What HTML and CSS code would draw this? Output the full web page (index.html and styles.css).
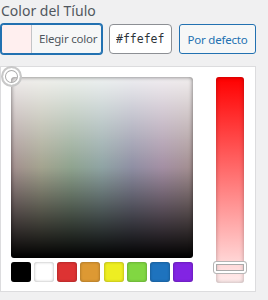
FILE: index.html
```html
<!DOCTYPE html>
<html lang="es">
<head>
    <meta charset="UTF-8" />
    <title>Color del Tíulo</title>
    <link rel="stylesheet" href="styles.css">
</head>
<body>
    <div class="control">
        <span class="control-title">Color del Tíulo</span>

        <div class="picker-row">
            <button class="color-result">
                <span class="color-swatch"></span>
                <span class="color-label">Elegir color</span>
            </button>
            <input type="text" class="color-input" value="#ffefef" />
            <button class="default-btn">Por defecto</button>
        </div>

        <div class="iris">
            <div class="iris-left">
                <div class="iris-square">
                    <span class="square-handle"></span>
                </div>
                <div class="palette">
                    <span class="pal" style="background:#000000"></span>
                    <span class="pal" style="background:#ffffff"></span>
                    <span class="pal" style="background:#dd3333"></span>
                    <span class="pal" style="background:#dd9933"></span>
                    <span class="pal" style="background:#eeee22"></span>
                    <span class="pal" style="background:#81d742"></span>
                    <span class="pal" style="background:#1e73be"></span>
                    <span class="pal" style="background:#8224e3"></span>
                </div>
            </div>
            <div class="iris-strip">
                <span class="strip-handle"></span>
            </div>
        </div>
    </div>
</body>
</html>
```

FILE: styles.css
```css
body {
    margin: 0;
    background: #f0f0f1;
    font-family: "Noto Sans", "Open Sans", sans-serif;
    color: #50575e;
}

.control {
    padding: 1px 0 0 1px;
}

.control-title {
    display: block;
    font-size: 14px;
    line-height: 20px;
    height: 23px;
}

.picker-row {
    display: flex;
    gap: 7px;
    height: 30px;
}

.color-result {
    display: flex;
    align-items: stretch;
    width: 101px;
    height: 30px;
    padding: 0;
    border: 1px solid #2271b1;
    border-radius: 3px;
    box-shadow: 0 0 0 1px #2271b1;
    background: #f6f7f7;
    overflow: hidden;
    font-family: inherit;
    cursor: pointer;
}

.color-swatch {
    flex: none;
    width: 29px;
    background: #ffefef;
    border-right: 1px solid #c3c4c7;
}

.color-label {
    padding-left: 7px;
    font-size: 11.5px;
    letter-spacing: -0.2px;
    line-height: 28px;
    white-space: nowrap;
    color: #50575e;
}

.color-input {
    box-sizing: border-box;
    width: 63px;
    height: 30px;
    margin: 0;
    padding: 0 6px;
    border: 1px solid #8c8f94;
    border-radius: 4px;
    background: #fff;
    font-family: "DejaVu Sans Mono", monospace;
    font-size: 11.5px;
    color: #2c3338;
}

.default-btn {
    width: 77px;
    height: 30px;
    padding: 0;
    border: 1px solid #2271b1;
    border-radius: 3px;
    background: #f6f7f7;
    color: #2271b1;
    font-family: inherit;
    font-size: 11.5px;
    letter-spacing: -0.2px;
    white-space: nowrap;
    cursor: pointer;
}

.iris {
    display: flex;
    box-sizing: border-box;
    width: 256px;
    height: 226px;
    margin: 12px 0 0 -1px;
    padding: 10px 10px 8px 10px;
    border: 1px solid #dcdcde;
    background: #fff;
}

.iris-left {
    width: 182px;
}

.iris-square {
    position: relative;
    height: 181px;
    border-radius: 3px;
    background:
        linear-gradient(to bottom, rgba(255,255,255,0.85) 0%, rgba(255,255,255,0) 50%, rgba(0,0,0,0) 50%, #000 100%),
        linear-gradient(to right, hsl(0,10%,60%), hsl(60,10%,60%), hsl(120,10%,60%), hsl(180,10%,60%), hsl(240,10%,60%), hsl(300,10%,60%), hsl(360,10%,60%));
    box-shadow: inset 0 0 4px rgba(0,0,0,0.55);
}

.square-handle {
    position: absolute;
    left: -10px;
    top: -11px;
    width: 17px;
    height: 17px;
    border: 2px solid #c8c8c8;
    border-radius: 50%;
    box-shadow: inset 0 0 0 2px #fff, inset 0 0 0 3px #aaa;
}

.palette {
    display: flex;
    justify-content: space-between;
    margin-top: 4px;
}

.pal {
    width: 20px;
    height: 20px;
    border-radius: 3px;
    box-shadow: inset 0 0 3px rgba(0,0,0,0.35);
}

.iris-strip {
    position: relative;
    width: 28px;
    height: 206px;
    margin-left: 23px;
    border-radius: 3px;
    background: linear-gradient(to bottom, #ff0000, #ffeeee);
    box-shadow: inset 0 0 4px rgba(0,0,0,0.3);
}

.strip-handle {
    position: absolute;
    left: -3px;
    right: -3px;
    top: 184px;
    height: 11px;
    border: 1px solid #b5b5b5;
    border-radius: 3px;
    box-shadow: inset 0 0 0 2px #fff, inset 0 0 0 3px #aaa;
}
```
